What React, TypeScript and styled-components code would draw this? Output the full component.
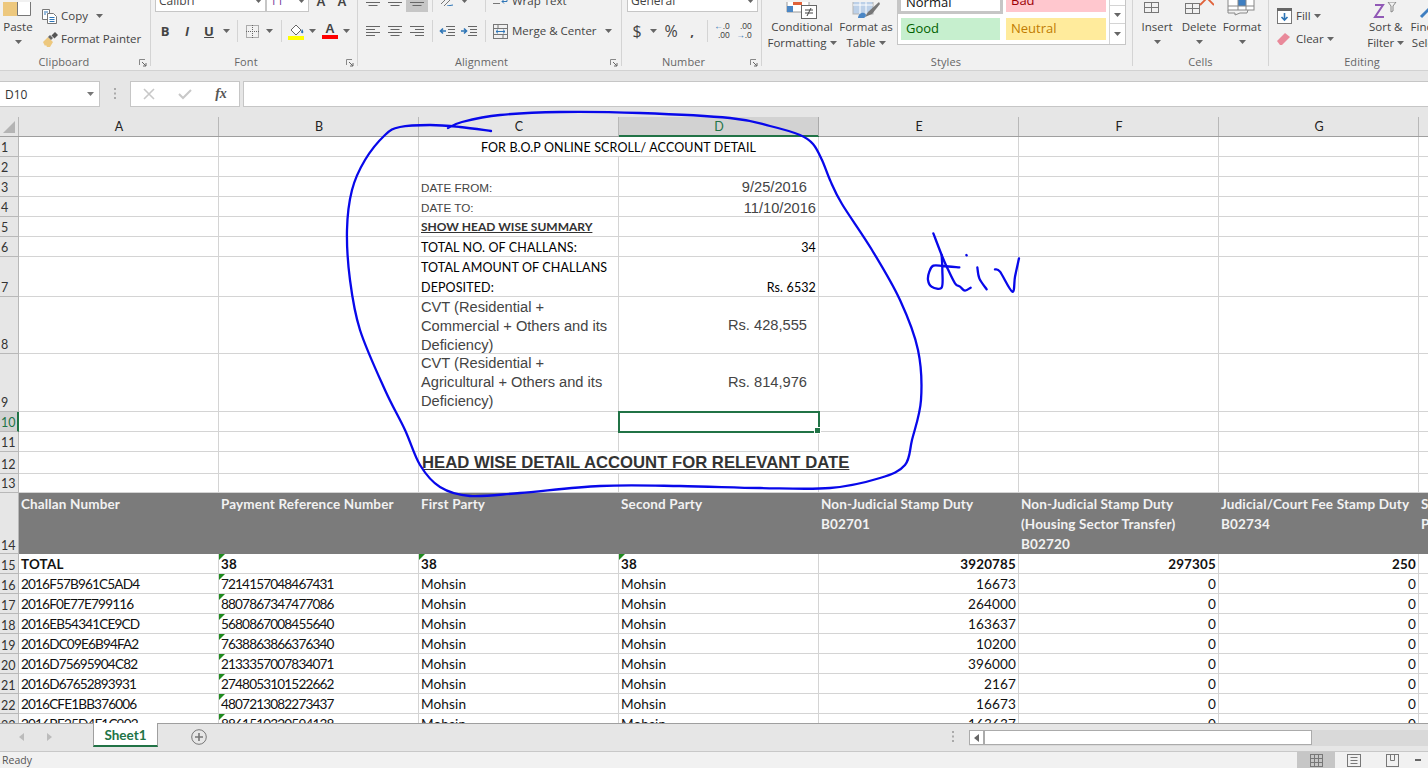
import React from "react";
import styled, { createGlobalStyle, css } from "styled-components";

const Global = createGlobalStyle`
  html, body { margin: 0; padding: 0; background: #fff; }
  #root { width: 1428px; height: 768px; }
`;

const UI = `"Open Sans", "Noto Sans", sans-serif`;
const CAL = `Lato, "Noto Sans", sans-serif`;
const ARIAL = `"Liberation Sans", Arial, sans-serif`;

const Page = styled.div`
  position: relative; width: 1428px; height: 768px; overflow: hidden;
  display: flex; flex-direction: column; background: #e6e6e6; font-family: ${UI};
`;

/* ---------- Ribbon ---------- */
const Ribbon = styled.div`
  height: 70px; flex: none; display: flex; background: #f1f1f1;
  border-bottom: 1px solid #d2d2d2; overflow: hidden; color: #444;
`;
const Group = styled.section<{ $w: number; $last?: boolean }>`
  flex: none; width: ${p => p.$w}px; height: 66px; box-sizing: border-box;
  display: flex; flex-direction: column;
  border-right: ${p => (p.$last ? "none" : "1px solid #d4d4d4")};
`;
const GroupBody = styled.div<{ $row?: boolean }>`
  flex: none; height: 54px; display: flex; flex-direction: ${p => (p.$row ? "row" : "column")};
`;
const Footer = styled.div`
  height: 12px; display: grid; grid-template-columns: 1fr auto 1fr; align-items: center;
`;
const FooterText = styled.span<{ $shift?: number }>`
  grid-column: 2; font-size: 11px; line-height: 16px; color: #666; letter-spacing: .1px;
  transform: translateX(${p => p.$shift ?? 0}px);
`;
const Launcher = styled.span`
  grid-column: 3; justify-self: end; display: flex; margin-right: 3px; margin-top: 1px;
`;
const ClipRow = styled.div`
  height: 12px; display: flex; align-items: flex-end; overflow: hidden; flex: none;
`;
const ToolRow = styled.div`
  height: 22px; margin-top: 8px; display: flex; align-items: center; flex: none;
`;
const Slot = styled.span<{ $w: number; $ml?: number; $active?: boolean }>`
  flex: none; width: ${p => p.$w}px; height: 22px; margin-left: ${p => p.$ml ?? 0}px;
  display: flex; align-items: center; justify-content: center;
  background: ${p => (p.$active ? "#c6c6c6" : "transparent")};
`;
const Divider = styled.span<{ $ml: number }>`
  flex: none; width: 1px; height: 22px; margin-left: ${p => p.$ml}px; background: #d4d4d4;
`;
const Glyph = styled.span<{ $serif?: boolean }>`
  font-size: 13px; font-weight: 700; color: #444;
  ${p => p.$serif && css`font-family: ${ARIAL};`}
`;
const ThinGlyph = styled.span`font-size: 16px; font-weight: 400; color: #444;`;
const DecimalIcon = styled.span`
  display: flex; flex-direction: column; align-items: flex-end; font-family: ${ARIAL};
  font-size: 8.500px; line-height: 9px; color: #444;
`;
const BlueArrow = styled.span`color: #2e75b6; font-weight: 700;`;
const ToolText = styled.span<{ $ml?: number; $mb?: number }>`
  font-size: 11.5px; line-height: 16px; color: #444; white-space: nowrap;
  margin-left: ${p => p.$ml ?? 0}px; margin-bottom: ${p => p.$mb ?? 0}px;
`;
const SelectBox = styled.div<{ $w: number; $ml?: number }>`
  flex: none; box-sizing: border-box; width: ${p => p.$w}px; height: 22px; margin-left: ${p => p.$ml ?? 0}px;
  display: flex; align-items: center; justify-content: space-between; padding: 0 3px;
  background: #fff; border: 1px solid #c6c6c6; font-size: 12px; color: #444;
`;
const SelectValue = styled.span<{ $purple?: boolean }>`
  color: ${p => (p.$purple ? "#7a3e9d" : "#444")}; margin-top: -1px;
`;
const BigButton = styled.div<{ $w: number; $ml?: number }>`
  flex: none; width: ${p => p.$w}px; margin-left: ${p => p.$ml ?? 0}px;
  display: flex; flex-direction: column; align-items: center;
`;
const BigIcon = styled.div<{ $pb?: number; $px?: number }>`
  height: 19px; width: 100%; box-sizing: border-box; overflow: hidden; display: flex; align-items: flex-end; justify-content: center;
  padding-bottom: ${p => p.$pb ?? 0}px; padding-right: ${p => p.$px ?? 0}px;
`;
const BigLabel = styled.div`
  font-size: 11.5px; line-height: 16px; color: #444; white-space: nowrap;
  display: flex; align-items: center; height: 16px;
`;
const BigCaret = styled.div`height: 14px; display: flex; align-items: center; justify-content: center;`;
const SmallStack = styled.div<{ $ml?: number }>`
  display: flex; flex-direction: column; margin-left: ${p => p.$ml ?? 0}px; padding-top: 6px; gap: 3px;
`;
const SmallLine = styled.div`height: 20px; display: flex; align-items: center;`;
const Gallery = styled.div`
  flex: none; box-sizing: border-box; width: 229px; height: 46px; margin-top: -1px; margin-left: -1px;
  display: flex; background: #fff; border: 1px solid #c6c6c6; border-top: none;
`;
const StyleGrid = styled.div`
  width: 212px; display: grid; grid-template-columns: 105px 100px; column-gap: 3px;
  grid-template-rows: 15px 22px; row-gap: 4px;
`;
const StyleCell = styled.div<{ $bg: string; $fg: string; $boxed?: boolean; $ml?: number; $mr?: number; $mb?: number; $pb?: number }>`
  display: flex; align-items: center; box-sizing: border-box; padding-left: 5px; padding-bottom: ${p => p.$pb ?? 0}px;
  font-size: 13px; background: ${p => p.$bg}; color: ${p => p.$fg};
  margin-left: ${p => p.$ml ?? 0}px; margin-right: ${p => p.$mr ?? 0}px; margin-bottom: ${p => p.$mb ?? 0}px;
  ${p => p.$boxed && css`border: 3px solid #c6c6c6; border-top: none;`}
  overflow: hidden;
`;
const GalleryScroll = styled.div`
  flex: none; width: 15px; display: flex; flex-direction: column; border-left: 1px solid #d4d4d4;
`;
const GalleryBtn = styled.div<{ $h: number }>`
  height: ${p => p.$h}px; display: flex; align-items: center; justify-content: center;
  border-bottom: 1px solid #d4d4d4; background: #fff;
  &:last-child { border-bottom: none; }
`;

/* ---------- Formula bar ---------- */
const FormulaBand = styled.div`
  height: 46px; flex: none; display: flex; align-items: flex-start; padding-top: 10px; box-sizing: border-box; background: #e6e6e6;
`;
const NameBox = styled.div`
  box-sizing: border-box; width: 100px; height: 26px; background: #fff; border: 1px solid #c6c6c6; border-left: none;
  display: flex; align-items: center; justify-content: space-between; padding: 0 5px;
  font-size: 12px; color: #333;
`;
const Grip = styled.div`
  width: 30px; height: 26px; display: flex; align-items: center; justify-content: center;
`;
const FormulaButtons = styled.div`
  box-sizing: border-box; width: 110px; height: 26px; background: #fff; border: 1px solid #c6c6c6;
  display: grid; grid-template-columns: repeat(3, 36px); align-items: center; justify-items: center;
`;
const FormulaInput = styled.div`
  box-sizing: border-box; flex: 1; margin-left: 3px; height: 26px; background: #fff; border: 1px solid #c6c6c6; border-right: none;
`;
const Fx = styled.span`
  font-family: "Liberation Serif", serif; font-style: italic; font-size: 14px; color: #555; font-weight: 700;
`;

/* ---------- Sheet ---------- */
const Sheet = styled.div`flex: 1; min-height: 0; overflow: hidden; background: #fff; display: flex; flex-direction: column;`;
const HeaderRow = styled.div`height: 19px; flex: none; display: flex; background: #e6e6e6; border-bottom: 1px solid #9f9f9f;`;
const Corner = styled.div`
  flex: none; width: 19px; box-sizing: border-box; border-right: 1px solid #b8b8b8;
  display: flex; align-items: flex-end; justify-content: flex-end; padding: 0 3px 3px 0;
`;
const ColHead = styled.div<{ $sel?: boolean }>`
  flex: none; width: 200px; box-sizing: border-box; padding-left: 1px; text-align: center; font-family: ${CAL}; font-size: 12.5px; line-height: 20px;
  color: ${p => (p.$sel ? "#217346" : "#222")};
  background: ${p => (p.$sel ? "#d2d2d2" : "transparent")};
  border-right: 1px solid ${p => (p.$sel ? "#aaa" : "#b8b8b8")};
  ${p => p.$sel && css`box-shadow: inset 0 -1px 0 #217346, 0 1px 0 #217346;`}
`;
const Row = styled.div<{ $h: number }>`height: ${p => p.$h}px; flex: none; display: flex;`;
const RowHead = styled.div<{ $sel?: boolean; $low?: boolean }>`
  flex: none; width: 19px; box-sizing: border-box; padding-left: 1px; display: flex; align-items: flex-end;
  background: ${p => (p.$sel ? "#d2d2d2" : "#e6e6e6")};
  border-right: ${p => (p.$sel ? "2px solid #217346" : "1px solid #b8b8b8")};
  border-bottom: 1px solid #b8b8b8;
  font-family: ${CAL}; font-size: 12.5px; line-height: ${p => (p.$low ? 15 : 17)}px; color: ${p => (p.$sel ? "#217346" : "#333")};
`;
type CellKind = "cal" | "calBold" | "upper" | "arial" | "arialSmall" | "head" | "title" | "summary";
const kindCss: Record<CellKind, ReturnType<typeof css>> = {
  cal: css`font-family: ${CAL}; font-size: 13.6px; color: #111; letter-spacing: .12px; line-height: 20px;`,
  calBold: css`font-family: ${CAL}; font-weight: 700; font-size: 13.4px; color: #111; letter-spacing: .2px; line-height: 20px;`,
  upper: css`font-family: ${CAL}; font-size: 12.5px; color: #000; letter-spacing: .12px; line-height: 20px;`,
  arial: css`font-family: ${ARIAL}; font-size: 14.67px; color: #444; line-height: 19px;`,
  arialSmall: css`font-family: ${ARIAL}; font-size: 11.7px; color: #444; line-height: 20px;`,
  head: css`font-family: ${CAL}; font-weight: 700; font-size: 13.5px; color: #f2f2f2; line-height: 20px; letter-spacing: .15px;`,
  title: css`font-family: ${ARIAL}; font-weight: 700; font-size: 16.7px; color: #333; text-decoration: underline; line-height: 20px; padding-left: 3px;`,
  summary: css`font-family: ${CAL}; font-weight: 700; font-size: 12px; color: #333; text-decoration: underline; line-height: 20px;`,
};
const Cell = styled.div<{
  $kind?: CellKind; $span?: number; $right?: boolean; $center?: boolean; $valign?: "top" | "middle";
  $dark?: boolean; $flag?: boolean; $pr?: number; $drop?: number; $tight?: boolean;
}>`
  position: relative; flex: none; box-sizing: border-box; width: ${p => 200 * (p.$span ?? 1)}px;
  padding: ${p => (p.$valign === "top" ? 1 : 0)}px ${p => p.$pr ?? 2}px 0 2px; display: flex; overflow: hidden; white-space: pre;
  flex-direction: column;
  justify-content: ${p => (p.$valign === "top" ? "flex-start" : p.$valign === "middle" ? "center" : "flex-end")};
  text-align: ${p => (p.$right ? "right" : p.$center ? "center" : "left")};
  background: ${p => (p.$dark ? "#7b7b7b" : "#fff")};
  border-right: 1px solid ${p => (p.$dark ? "#7b7b7b" : "#d4d4d4")};
  border-bottom: 1px solid ${p => (p.$dark ? "#7b7b7b" : "#d4d4d4")};
  ${p => kindCss[p.$kind ?? "cal"]}
  ${p => p.$tight && css`letter-spacing: -.85px;`}
  ${p => !p.$valign && css`
    &::after { content: ""; margin-top: -${p.$drop ?? 1}px; }
  `}
  ${p => p.$flag && css`
    &::before {
      content: ""; position: absolute; left: 0; top: 0; width: 0; height: 0;
      border-top: 6px solid #1e8a1e; border-right: 6px solid transparent;
    }
  `}
`;
const Selection = styled.div`
  position: absolute; left: 618px; top: 411px; width: 202px; height: 22px; box-sizing: border-box;
  border: 2px solid #217346; pointer-events: none;
  &::after {
    content: ""; position: absolute; right: -3px; bottom: -3px; width: 5px; height: 5px;
    background: #217346; border: 1px solid #fff;
  }
`;

/* ---------- Tabs + status ---------- */
const TabBar = styled.div`
  height: 28px; flex: none; box-sizing: border-box; display: flex; align-items: flex-start;
  background: #e6e6e6; border-top: 1px solid #9f9f9f;
`;
const NavArrows = styled.div`
  width: 93px; height: 26px; flex: none; display: flex; align-items: center; gap: 23px; padding-left: 19px; box-sizing: border-box;
`;
const Tab = styled.div`
  box-sizing: border-box; width: 65px; height: 24px; margin-top: -1px; background: #fff; text-align: center;
  border-left: 1px solid #9f9f9f; border-right: 1px solid #9f9f9f; border-bottom: 2px solid #217346;
  font-family: ${CAL}; font-weight: 700; font-size: 13.5px; line-height: 24px; color: #217346;
`;
const AddSheet = styled.div`
  margin-left: 33px; width: 16px; height: 26px; display: flex; align-items: center;
`;
const TabSpacer = styled.div`flex: 1;`;
const TabGrip = styled.div`width: 16px; height: 26px; margin-right: 8px; display: flex; align-items: center; justify-content: center;`;
const HScroll = styled.div`
  width: 459px; height: 16px; margin-top: 6px; box-sizing: border-box; display: flex; background: #d9d9d9;
`;
const HLeftBtn = styled.div`
  width: 15px; height: 15px; box-sizing: border-box; background: #fff; border: 1px solid #ababab;
  display: flex; align-items: center; justify-content: center;
`;
const HThumb = styled.div`
  width: 328px; height: 15px; box-sizing: border-box; background: #fff; border: 1px solid #ababab;
`;
const StatusBar = styled.div`
  height: 17px; flex: none; box-sizing: border-box; display: flex; align-items: center; background: #f1f1f1;
  border-top: 1px solid #c8c8c8; padding-left: 2px; font-size: 10.5px; color: #555;
`;
const StatusViews = styled.div`margin-left: auto; display: flex; height: 100%; align-items: center;`;
const ViewBtn = styled.div<{ $active?: boolean }>`
  width: 38px; height: 100%; display: flex; align-items: center; justify-content: center;
  background: ${p => (p.$active ? "#c6c6c6" : "transparent")};
`;
const Minus = styled.div`width: 6px; height: 2px; background: #666; margin: 0 7px 0 4px;`;
const Ink = styled.svg`position: absolute; left: 0; top: 0; pointer-events: none;`;

/* ---------- Icons ---------- */
const Caret = ({ c = "#666" }: { c?: string }) => (
  <svg width="7" height="4" viewBox="0 0 7 4"><path d="M0 0h7L3.500 4z" fill={c} /></svg>
);
const LauncherIcon = () => (
  <svg width="8" height="8" viewBox="0 0 8 8"><path d="M.5 6V.5H6" fill="none" stroke="#888" /><path d="M3 3l4 4M7 4v3H4" fill="none" stroke="#666" /></svg>
);
const Lines = ({ kind }: { kind: "l" | "c" | "r" }) => {
  const s = (w: number) => (kind === "l" ? 0 : kind === "c" ? (14 - w) / 2 : 14 - w);
  return (
    <svg width="14" height="11" viewBox="0 0 14 11" stroke="#666">
      {[[.5, 14], [3.5, 9], [6.5, 14], [9.5, 9]].map(([y, w]) => <path key={y} d={`M${s(w)} ${y}h${w}`} />)}
    </svg>
  );
};
const Indent = ({ out }: { out?: boolean }) => (
  <svg width="16" height="11" viewBox="0 0 16 11">
    <path d="M7 .5h9M9 3.5h7M9 6.5h7M7 9.5h9" stroke="#666" />
    {out ? <path d="M7 5H2M4 2.5L1.500 5 4 7.500" stroke="#2e75b6" strokeWidth="1.600" fill="none" />
      : <path d="M0 5h5M3 2.500L5.500 5 3 7.500" stroke="#2e75b6" strokeWidth="1.600" fill="none" />}
  </svg>
);
const MergeIcon = () => (
  <svg width="15" height="15" viewBox="0 0 15 15" fill="none">
    <rect x=".5" y=".5" width="14" height="14" stroke="#777" /><path d="M.5 4.500h14M.5 10.500h14M5 .5v4M10 10.500v4" stroke="#777" />
    <path d="M3 7.500h9M5 5.700L3 7.500l2 1.800M10 5.700l2 1.800-2 1.800" stroke="#2e75b6" />
  </svg>
);
const WrapIcon = () => (
  <svg width="15" height="12" viewBox="0 0 15 12" fill="none"><path d="M0 .5h14M0 4.500h7M0 8.500h7" stroke="#777" /><path d="M14 .5v6H9m2-2l-2 2 2 2" stroke="#2e75b6" /></svg>
);
const AngleIcon = () => (
  <svg width="14" height="10" viewBox="0 0 14 10" fill="none"><path d="M1 8L10 -1M4 10l9-9" stroke="#777" /><path d="M7 10l6-1" stroke="#2e75b6" /></svg>
);
const PasteIcon = () => (
  <svg width="30" height="17" viewBox="0 0 30 17">
    <rect x="0" y="-8" width="14" height="22" fill="#edc87e" />
    <path d="M14.500 -4h9l4 4v13.500h-13z" fill="#fff" stroke="#777" />
  </svg>
);
const CopyIcon = () => (
  <svg width="16" height="15" viewBox="0 0 16 15" fill="none">
    <path d="M.5.5h7v10h-7z" fill="#fff" stroke="#777" /><path d="M5.500 4.500h6l3 3v7h-9z" fill="#fff" stroke="#777" />
    <path d="M2 3h4M2 5h2M7.500 8.500h5M7.500 10.500h5M7.500 12.500h5" stroke="#2e75b6" />
  </svg>
);
const BrushIcon = () => (
  <svg width="17" height="15" viewBox="0 0 17 15">
    <path d="M1 10l5-5 5 5-3 5H5l-1-2-1 1-1-2z" fill="#edc87e" />
    <path d="M6 5l2-2 3 3-2 2z" fill="#666" /><path d="M9.500 3.500L13 0l3 3-3.500 3.500z" fill="#555" />
  </svg>
);
const BorderIcon = () => (
  <svg width="13" height="13" viewBox="0 0 13 13" stroke="#666" strokeDasharray="1 1" fill="none"><rect x=".5" y=".5" width="12" height="12" /><path d="M6.500 0v13M0 6.500h13" /></svg>
);
const FillIcon = () => (
  <svg width="17" height="17" viewBox="0 0 17 17">
    <path d="M3 7l5-5 5 5-5 5z" fill="#fff" stroke="#666" /><path d="M14 6c1.400 2 1.600 3 1 4-1 .5-2 0-2-1z" fill="#2e75b6" /><rect y="13" width="16" height="4" fill="#ffff00" />
  </svg>
);
const FontColorWrap = styled.span`display: flex; flex-direction: column; align-items: center; line-height: 12px;`;
const FontColor = () => (
  <FontColorWrap>
    <Glyph $serif>A</Glyph>
    <svg width="16" height="4"><rect width="16" height="4" fill="#ff0000" /></svg>
  </FontColorWrap>
);
const CondIcon = () => (
  <svg width="32" height="17" viewBox="0 0 32 17" fill="none">
    <path d="M1 -6h22v16H1z" fill="#fff" stroke="#999" /><rect x="7" y="-4" width="9" height="7" fill="#e0623a" /><rect x="1" y="4" width="6" height="6" fill="#4a86c5" />
    <rect x="15.500" y="3.500" width="15" height="13" fill="#fff" stroke="#666" />
    <path d="M19 8h8M19 11h8M25 6l-4 8" stroke="#444" />
  </svg>
);
const TableIcon = () => (
  <svg width="30" height="17" viewBox="0 0 30 17" fill="none">
    <rect x="2" y="-8" width="20" height="20" fill="#bcd0e8" stroke="#b5b5b5" />
    <path d="M9 -8v20M15 -8v20M2 3h20" stroke="#fff" />
    <path d="M14 15l3-5 11-10 1 2-8 10z" fill="#777" /><path d="M7 16c0-3 3-6 6-5 3 1 2 4 0 5z" fill="#4a86c5" />
  </svg>
);
const InsertIcon = () => (
  <svg width="16" height="12" viewBox="0 0 16 12" fill="none" stroke="#777"><rect x=".5" y=".5" width="14" height="10" /><path d="M7.500 0v11M0 5.500h15" /></svg>
);
const DeleteIcon = () => (
  <svg width="30" height="15" viewBox="0 0 30 15" fill="none"><g stroke="#777"><rect x="1.500" y="3.500" width="14" height="10" /><path d="M8.500 3v11M1 8.500h15" /></g><path d="M16 5l7-7 7 7" stroke="#e0623a" strokeWidth="1.800" /></svg>
);
const FormatIcon = () => (
  <svg width="30" height="16" viewBox="0 0 30 16" fill="none" stroke="#888">
    <rect x="1" y="-8" width="26" height="18" fill="#fff" /><rect x="11" y="-8" width="8" height="14" fill="#3f7fc1" stroke="none" />
    <path d="M11 -8v18M19 -8v18M1 6h26" /><path d="M1 10v3h7v2l5-2h7l1-3" />
  </svg>
);
const FillDown = () => (
  <svg width="15" height="16" viewBox="0 0 15 16" fill="none"><rect x=".5" y=".5" width="14" height="15" fill="#fff" stroke="#777" /><rect width="15" height="3" fill="#666" /><path d="M7.500 5v7M4.500 9l3 3 3-3" stroke="#2e75b6" strokeWidth="1.600" /></svg>
);
const Eraser = () => (
  <svg width="14" height="14" viewBox="0 0 14 14"><path d="M0 9l8-8 5 4-8 8H3z" fill="#e9899a" /></svg>
);
const SortIcon = () => (
  <svg width="26" height="17" viewBox="0 0 26 17" fill="none"><path d="M2 3h8L2 15h9" stroke="#9159b6" strokeWidth="2" /><path d="M15 0h8l-3 4v5l-2 1V4z" stroke="#888" /></svg>
);
const FindIcon = () => (
  <svg width="18" height="17" viewBox="0 0 18 17" fill="none"><path d="M2 15L12 5" stroke="#3f7fc1" strokeWidth="3" /></svg>
);

function smooth(pts: number[][]) {
  let d = `M${pts[0][0]} ${pts[0][1]}`;
  for (let i = 0; i < pts.length - 1; i++) {
    const p0 = pts[Math.max(i - 1, 0)], p1 = pts[i], p2 = pts[i + 1], p3 = pts[Math.min(i + 2, pts.length - 1)];
    const c1 = [p1[0] + (p2[0] - p0[0]) / 6, p1[1] + (p2[1] - p0[1]) / 6];
    const c2 = [p2[0] - (p3[0] - p1[0]) / 6, p2[1] - (p3[1] - p1[1]) / 6];
    d += `C${c1[0]} ${c1[1]} ${c2[0]} ${c2[1]} ${p2[0]} ${p2[1]}`;
  }
  return d;
}
const loop = [[448,128],[462,122],[500,115],[560,112],[640,113],[730,118],[770,126],[800,135],[813,144],[822,160],[830,180],[842,204],[872,250],[900,300],[918,350],[921,400],[912,440],[905,465],[880,478],[830,488],[760,488],[680,486],[600,486],[520,493],[470,496],[440,487],[420,465],[405,430],[385,390],[360,330],[350,280],[347,230],[352,190],[365,160],[385,135],[400,127],[430,125],[460,127],[491,131]];
const h = (a: number[][]) => a.map(([x, y]) => [900 + x / 3, 220 + y / 3]);
const inkDiv = [
  [[100,40],[125,105],[140,140],[165,190],[180,200],[195,212],[212,203]],
  [[178,142],[130,138],[100,137],[88,155],[84,180],[95,200],[125,203],[127,150],[125,105]],
  [[232,142],[238,175],[260,208]],
  [[199,105],[200,106]],
  [[285,148],[300,155],[337,215],[345,170],[357,115]],
].map(h);

/* ---------- Data ---------- */
const cols = ["A", "B", "C", "D", "E", "F", "G", "H"];
const dataRows = [
  ["2016F57B961C5AD4", "7214157048467431", "16673"],
  ["2016F0E77E799116", "8807867347477086", "264000"],
  ["2016EB54341CE9CD", "5680867008455640", "163637"],
  ["2016DC09E6B94FA2", "7638863866376340", "10200"],
  ["2016D75695904C82", "2133357007834071", "396000"],
  ["2016D67652893931", "2748053101522662", "2167"],
  ["2016CFE1BB376006", "4807213082273437", "16673"],
  ["2016BF25D4F1C902", "8861510320594138", "163637"],
];

const Blanks = ({ n }: { n: number }) => <>{Array.from({ length: n }, (_, i) => <Cell key={i} />)}</>;

export default function App() {
  return (
    <Page>
      <Global />
      <Ribbon>
        <Group $w={151}>
          <GroupBody $row>
            <BigButton $w={36}>
              <BigIcon><PasteIcon /></BigIcon>
              <BigLabel>Paste</BigLabel>
              <BigCaret><Caret /></BigCaret>
            </BigButton>
            <SmallStack $ml={6}>
              <SmallLine><CopyIcon /><ToolText $ml={3}>Copy</ToolText><Slot $w={24}><Caret /></Slot></SmallLine>
              <SmallLine><BrushIcon /><ToolText $ml={2}>Format Painter</ToolText></SmallLine>
            </SmallStack>
          </GroupBody>
          <Footer><FooterText $shift={-11}>Clipboard</FooterText><Launcher><LauncherIcon /></Launcher></Footer>
        </Group>

        <Group $w={207}>
          <GroupBody>
            <ClipRow>
              <SelectBox $w={111} $ml={4}><SelectValue>Calibri</SelectValue><Caret /></SelectBox>
              <SelectBox $w={43}><SelectValue $purple>11</SelectValue><Caret /></SelectBox>
              <Slot $w={22} $ml={1}><Glyph $serif>A</Glyph></Slot>
              <Slot $w={20}><Glyph $serif>A</Glyph></Slot>
            </ClipRow>
            <ToolRow>
              <Slot $w={22} $ml={3}><Glyph>B</Glyph></Slot>
              <Slot $w={22}><Glyph as="i" $serif>I</Glyph></Slot>
              <Slot $w={22}><Glyph as="u">U</Glyph></Slot>
              <Slot $w={12}><Caret /></Slot>
              <Divider $ml={5} />
              <Slot $w={22} $ml={3}><BorderIcon /></Slot>
              <Slot $w={12}><Caret /></Slot>
              <Divider $ml={6} />
              <Slot $w={22} $ml={3}><FillIcon /></Slot>
              <Slot $w={10}><Caret /></Slot>
              <Slot $w={22} $ml={2}><FontColor /></Slot>
              <Slot $w={10}><Caret /></Slot>
            </ToolRow>
          </GroupBody>
          <Footer><FooterText $shift={-8}>Font</FooterText><Launcher><LauncherIcon /></Launcher></Footer>
        </Group>

        <Group $w={264}>
          <GroupBody>
            <ClipRow>
              <Slot $w={22} $ml={4}><Lines kind="c" /></Slot>
              <Slot $w={22}><Lines kind="c" /></Slot>
              <Slot $w={22} $active><Lines kind="c" /></Slot>
              <Divider $ml={4} />
              <Slot $w={22} $ml={3}><AngleIcon /></Slot>
              <Slot $w={12}><Caret /></Slot>
              <Slot $w={10} />
              <Divider $ml={5} />
              <Slot $w={16} $ml={6}><WrapIcon /></Slot>
              <ToolText $ml={4} $mb={3}>Wrap Text</ToolText>
            </ClipRow>
            <ToolRow>
              <Slot $w={22} $ml={4}><Lines kind="l" /></Slot>
              <Slot $w={22}><Lines kind="c" /></Slot>
              <Slot $w={22}><Lines kind="r" /></Slot>
              <Divider $ml={4} />
              <Slot $w={22} $ml={3}><Indent out /></Slot>
              <Slot $w={22}><Indent /></Slot>
              <Divider $ml={5} />
              <Slot $w={16} $ml={6}><MergeIcon /></Slot>
              <ToolText $ml={4}>Merge &amp; Center</ToolText>
              <Slot $w={24}><Caret /></Slot>
            </ToolRow>
          </GroupBody>
          <Footer><FooterText $shift={-8}>Alignment</FooterText><Launcher><LauncherIcon /></Launcher></Footer>
        </Group>

        <Group $w={140}>
          <GroupBody>
            <ClipRow><SelectBox $w={131} $ml={5}><SelectValue>General</SelectValue><Caret /></SelectBox></ClipRow>
            <ToolRow>
              <Slot $w={22} $ml={4}><ThinGlyph>$</ThinGlyph></Slot>
              <Slot $w={10}><Caret /></Slot>
              <Slot $w={22} $ml={2}><ThinGlyph>%</ThinGlyph></Slot>
              <Slot $w={20}><Glyph>,</Glyph></Slot>
              <Divider $ml={5} />
              <Slot $w={22} $ml={3}><DecimalIcon><span><BlueArrow>←</BlueArrow>.0</span><span>.00</span></DecimalIcon></Slot>
              <Slot $w={22}><DecimalIcon><span>.00</span><span><BlueArrow>→</BlueArrow>.0</span></DecimalIcon></Slot>
            </ToolRow>
          </GroupBody>
          <Footer><FooterText $shift={-8}>Number</FooterText><Launcher><LauncherIcon /></Launcher></Footer>
        </Group>

        <Group $w={371}>
          <GroupBody $row>
            <BigButton $w={64} $ml={8}>
              <BigIcon><CondIcon /></BigIcon>
              <BigLabel>Conditional</BigLabel>
              <BigLabel>Formatting&nbsp;<Caret /></BigLabel>
            </BigButton>
            <BigButton $w={64}>
              <BigIcon><TableIcon /></BigIcon>
              <BigLabel>Format as</BigLabel>
              <BigLabel>Table&nbsp;<Caret /></BigLabel>
            </BigButton>
            <Gallery>
              <StyleGrid>
                <StyleCell $bg="#fff" $fg="#111" $boxed $pb={7}>Normal</StyleCell>
                <StyleCell $bg="#ffc7ce" $fg="#9c0006" $mb={2} $pb={12}>Bad</StyleCell>
                <StyleCell $bg="#c6efce" $fg="#006100" $ml={3} $mr={3} $pb={2}>Good</StyleCell>
                <StyleCell $bg="#ffeb9c" $fg="#c17b00" $pb={2}>Neutral</StyleCell>
              </StyleGrid>
              <GalleryScroll>
                <GalleryBtn $h={6} />
                <GalleryBtn $h={18}><Caret /></GalleryBtn>
                <GalleryBtn $h={20}><Caret /></GalleryBtn>
              </GalleryScroll>
            </Gallery>
          </GroupBody>
          <Footer><FooterText $shift={-1}>Styles</FooterText></Footer>
        </Group>

        <Group $w={136}>
          <GroupBody $row>
            <BigButton $w={42} $ml={3}>
              <BigIcon $pb={5} $px={10}><InsertIcon /></BigIcon>
              <BigLabel>Insert</BigLabel>
              <BigCaret><Caret /></BigCaret>
            </BigButton>
            <BigButton $w={42}>
              <BigIcon $pb={4}><DeleteIcon /></BigIcon>
              <BigLabel>Delete</BigLabel>
              <BigCaret><Caret /></BigCaret>
            </BigButton>
            <BigButton $w={44}>
              <BigIcon $pb={3}><FormatIcon /></BigIcon>
              <BigLabel>Format</BigLabel>
              <BigCaret><Caret /></BigCaret>
            </BigButton>
          </GroupBody>
          <Footer><FooterText>Cells</FooterText></Footer>
        </Group>

        <Group $w={200} $last>
          <GroupBody $row>
            <SmallStack $ml={8}>
              <SmallLine><FillDown /><ToolText $ml={4}>Fill</ToolText><Slot $w={14}><Caret /></Slot></SmallLine>
              <SmallLine><Eraser /><ToolText $ml={5}>Clear</ToolText><Slot $w={14}><Caret /></Slot></SmallLine>
            </SmallStack>
            <BigButton $w={46} $ml={25}>
              <BigIcon><SortIcon /></BigIcon>
              <BigLabel>Sort &amp;</BigLabel>
              <BigLabel>Filter&nbsp;<Caret /></BigLabel>
            </BigButton>
            <BigButton $w={44} $ml={-3}>
              <BigIcon><FindIcon /></BigIcon>
              <BigLabel>Find &amp;</BigLabel>
              <BigLabel>Select</BigLabel>
            </BigButton>
          </GroupBody>
          <Footer><FooterText $shift={-7}>Editing</FooterText></Footer>
        </Group>
      </Ribbon>

      <FormulaBand>
        <NameBox>D10<Caret c="#777" /></NameBox>
        <Grip><svg width="3" height="12"><path d="M0 1h2M0 5.500h2M0 10h2" stroke="#aaa" strokeWidth="2" /></svg></Grip>
        <FormulaButtons>
          <svg width="12" height="12" stroke="#c8c8c8" strokeWidth="1.600"><path d="M1 1l10 10M11 1L1 11" /></svg>
          <svg width="14" height="12" stroke="#c8c8c8" strokeWidth="2" fill="none"><path d="M1 6l4 4 8-8" /></svg>
          <Fx>fx</Fx>
        </FormulaButtons>
        <FormulaInput />
      </FormulaBand>

      <Sheet>
        <HeaderRow>
          <Corner><svg width="12" height="12"><path d="M12 0v12H0z" fill="#b4b4b4" /></svg></Corner>
          {cols.map(c => <ColHead key={c} $sel={c === "D"}>{c}</ColHead>)}
        </HeaderRow>

        <Row $h={20}><RowHead>1</RowHead><Blanks n={2} /><Cell $kind="upper" $span={2} $center $drop={2}>FOR B.O.P ONLINE SCROLL/ ACCOUNT DETAIL</Cell><Blanks n={4} /></Row>
        <Row $h={20}><RowHead>2</RowHead><Blanks n={8} /></Row>
        <Row $h={20}><RowHead>3</RowHead><Blanks n={2} /><Cell $kind="arialSmall" $drop={2}>DATE FROM:</Cell><Cell $kind="arial" $right $pr={11}>9/25/2016</Cell><Blanks n={4} /></Row>
        <Row $h={20}><RowHead>4</RowHead><Blanks n={2} /><Cell $kind="arialSmall" $drop={2}>DATE TO:</Cell><Cell $kind="arial" $right $drop={2}>11/10/2016</Cell><Blanks n={4} /></Row>
        <Row $h={20}><RowHead>5</RowHead><Blanks n={2} /><Cell $kind="summary" $drop={1}>SHOW HEAD WISE SUMMARY</Cell><Blanks n={5} /></Row>
        <Row $h={20}><RowHead>6</RowHead><Blanks n={2} /><Cell $kind="upper" $drop={2}>TOTAL NO. OF CHALLANS:</Cell><Cell $kind="upper" $right $drop={2}>34</Cell><Blanks n={4} /></Row>
        <Row $h={40}><RowHead>7</RowHead><Blanks n={2} /><Cell $kind="upper" $drop={2}>{"TOTAL AMOUNT OF CHALLANS\nDEPOSITED:"}</Cell><Cell $kind="upper" $right $drop={2}>Rs. 6532</Cell><Blanks n={4} /></Row>
        <Row $h={57}><RowHead>8</RowHead><Blanks n={2} /><Cell $kind="arial" $drop={2}>{"CVT (Residential +\nCommercial + Others and its\nDeficiency)"}</Cell><Cell $kind="arial" $right $pr={11} $valign="middle">Rs. 428,555</Cell><Blanks n={4} /></Row>
        <Row $h={58}><RowHead>9</RowHead><Blanks n={2} /><Cell $kind="arial" $drop={0}>{"CVT (Residential +\nAgricultural + Others and its\nDeficiency)"}</Cell><Cell $kind="arial" $right $pr={11} $valign="middle">Rs. 814,976</Cell><Blanks n={4} /></Row>
        <Row $h={20}><RowHead $sel>10</RowHead><Blanks n={8} /></Row>
        <Row $h={20}><RowHead>11</RowHead><Blanks n={8} /></Row>
        <Row $h={22}><RowHead>12</RowHead><Blanks n={2} /><Cell $kind="title" $span={3} $drop={0}>HEAD WISE DETAIL ACCOUNT FOR RELEVANT DATE</Cell><Blanks n={3} /></Row>
        <Row $h={19}><RowHead>13</RowHead><Blanks n={8} /></Row>
        <Row $h={61}>
          <RowHead $low>14</RowHead>
          <Cell $kind="head" $dark $valign="top">Challan Number</Cell>
          <Cell $kind="head" $dark $valign="top">Payment Reference Number</Cell>
          <Cell $kind="head" $dark $valign="top">First Party</Cell>
          <Cell $kind="head" $dark $valign="top">Second Party</Cell>
          <Cell $kind="head" $dark $valign="top">{"Non-Judicial Stamp Duty\nB02701"}</Cell>
          <Cell $kind="head" $dark $valign="top">{"Non-Judicial Stamp Duty\n(Housing Sector Transfer)\nB02720"}</Cell>
          <Cell $kind="head" $dark $valign="top">{"Judicial/Court Fee Stamp Duty\nB02734"}</Cell>
          <Cell $kind="head" $dark $valign="top">{"Stamp Duty\nPenalty"}</Cell>
        </Row>
        <Row $h={20}>
          <RowHead $low>15</RowHead>
          <Cell $kind="calBold">TOTAL</Cell>
          <Cell $kind="calBold" $flag>38</Cell>
          <Cell $kind="calBold" $flag>38</Cell>
          <Cell $kind="calBold" $flag>38</Cell>
          <Cell $kind="calBold" $right>3920785</Cell>
          <Cell $kind="calBold" $right>297305</Cell>
          <Cell $kind="calBold" $right>250</Cell>
          <Cell $kind="calBold" $right>0</Cell>
        </Row>
        {dataRows.map((r, i) => (
          <Row $h={20} key={r[0]}>
            <RowHead $low>{16 + i}</RowHead>
            <Cell $tight>{r[0]}</Cell>
            <Cell $flag $tight>{r[1]}</Cell>
            <Cell>Mohsin</Cell>
            <Cell>Mohsin</Cell>
            <Cell $right>{r[2]}</Cell>
            <Cell $right>0</Cell>
            <Cell $right>0</Cell>
            <Cell $right>0</Cell>
          </Row>
        ))}
      </Sheet>

      <TabBar>
        <NavArrows>
          <svg width="5" height="8"><path d="M5 0v8L0 4z" fill="#bbb" /></svg>
          <svg width="5" height="8"><path d="M0 0v8l5-4z" fill="#bbb" /></svg>
        </NavArrows>
        <Tab>Sheet1</Tab>
        <AddSheet><svg width="16" height="16" fill="none" stroke="#777"><circle cx="8" cy="8" r="7.300" /><path d="M8 4v8M4 8h8" strokeWidth="1.600" /></svg></AddSheet>
        <TabSpacer />
        <TabGrip><svg width="3" height="12"><path d="M0 1h2M0 5.500h2M0 10h2" stroke="#aaa" strokeWidth="2" /></svg></TabGrip>
        <HScroll>
          <HLeftBtn><svg width="5" height="8"><path d="M5 0v8L0 4z" fill="#666" /></svg></HLeftBtn>
          <HThumb />
        </HScroll>
      </TabBar>

      <StatusBar>
        Ready
        <StatusViews>
          <ViewBtn $active><svg width="13" height="13" fill="none" stroke="#777"><rect x=".5" y=".5" width="12" height="12" /><path d="M4.500 0v13M8.500 0v13M0 4.500h13M0 8.500h13" /></svg></ViewBtn>
          <ViewBtn><svg width="14" height="13" fill="none" stroke="#777"><rect x=".5" y=".5" width="13" height="12" /><path d="M3.500 3.500h7M3.500 6.500h7M3.500 9.500h7" /></svg></ViewBtn>
          <ViewBtn><svg width="13" height="13" fill="none" stroke="#777"><rect x=".5" y=".5" width="12" height="12" /><path d="M4.500 0v6.500h4V0" /></svg></ViewBtn>
          <Minus />
        </StatusViews>
      </StatusBar>

      <Selection />
      <Ink width="1428" height="768" viewBox="0 0 1428 768" fill="none" stroke="#0808ea" strokeWidth="2.300" strokeLinecap="round" strokeLinejoin="round">
        <path d={smooth(loop)} />
        {inkDiv.map((p, i) => <path key={i} d={smooth(p)} />)}
      </Ink>
    </Page>
  );
}
